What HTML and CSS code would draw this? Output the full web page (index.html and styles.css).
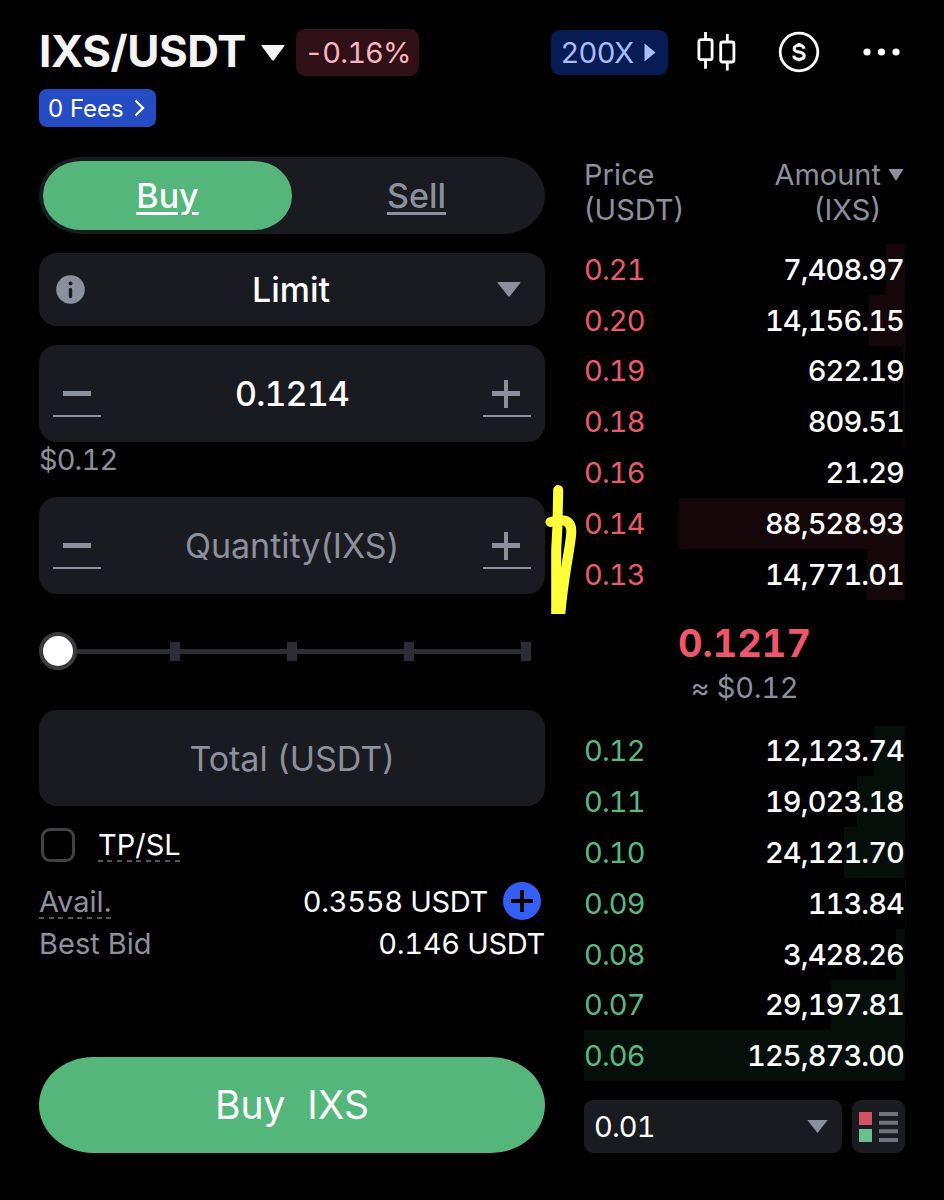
FILE: index.html
```html
<!DOCTYPE html>
<html lang="en">
<head>
  <meta charset="UTF-8" />
  <meta name="viewport" content="width=device-width, initial-scale=1" />
  <title>IXS/USDT</title>
  <link rel="stylesheet" href="styles.css">
</head>
<body>
  <header class="topbar">
    <h1 class="pair">IXS/USDT</h1>
    <svg class="pair-arrow" width="24" height="16" viewBox="0 0 24 16"><path d="M1 0h22q1 0 .4 1L13 15q-1 1-2 0L.6 1Q0 0 1 0z" fill="#f4f4f4"/></svg>
    <span class="change num">-0.16%</span>
    <div class="tools">
      <span class="leverage">200X
        <svg width="12" height="19" viewBox="0 0 12 19"><path d="M.5 0.5L11.5 9.5L.5 18.5z" fill="#a9bdfb"/></svg>
      </span>
      <svg class="icon-candles" width="40" height="40" viewBox="0 0 40 40" fill="none" stroke="#fff" stroke-width="2.8">
        <rect x="2.900" y="7.700" width="13.200" height="20" rx="2"/>
        <path d="M9.500 0v7.700M9.500 27.700v9"/>
        <rect x="24.700" y="10" width="13.200" height="20" rx="2"/>
        <path d="M31.300 2v8M31.300 30v8.500"/>
      </svg>
      <svg class="icon-dollar" width="42" height="42" viewBox="0 0 42 42">
        <circle cx="21" cy="21" r="18.800" fill="none" stroke="#fff" stroke-width="2.800"/>
        <path d="M26 17.800c-.4-2.300-2.300-3.500-5-3.500s-4.800 1.300-4.800 3.400c0 2.300 2.300 2.900 4.800 3.400s5.200 1.200 5.200 3.600c0 2.200-2.200 3.500-5.200 3.500s-5-1.300-5.300-3.600M21 12v2.500M21 27.500v2.700" fill="none" stroke="#fff" stroke-width="3.100"/>
      </svg>
      <svg class="icon-more" width="38" height="8" viewBox="0 0 38 8" fill="#fff"><circle cx="4" cy="4" r="3.600"/><circle cx="18.500" cy="4" r="3.600"/><circle cx="33" cy="4" r="3.600"/></svg>
    </div>
  </header>
  <div class="fees">0 Fees
    <svg width="11" height="18" viewBox="0 0 11 18"><path d="M1.500 1.500L9 9l-7.500 7.500" fill="none" stroke="#fff" stroke-width="2.300"/></svg>
  </div>

  <main class="trade">
    <section class="form">
      <div class="tabs">
        <div class="tab active"><span>Buy</span></div>
        <div class="tab"><span>Sell</span></div>
      </div>

      <div class="field order-type">
        <svg class="info" width="29" height="29" viewBox="0 0 29 29"><circle cx="14.500" cy="14.500" r="14.300" fill="#8c909e"/><circle cx="14.500" cy="8.500" r="2" fill="#1a1b20"/><path d="M14.500 14.500v7" stroke="#1a1b20" stroke-width="3.400" stroke-linecap="round"/></svg>
        <span class="value">Limit</span>
        <svg class="down" width="24" height="15" viewBox="0 0 24 15"><path d="M1 0h22q1 0 .3 1L13 14q-1 1-2 0L.7 1Q0 0 1 0z" fill="#8c909e"/></svg>
      </div>

      <div class="field stepper">
        <div class="step"><i class="bar"></i></div>
        <span class="value num">0.1214</span>
        <div class="step plus"><i class="bar"></i></div>
      </div>
      <div class="fiat num">$0.12</div>

      <div class="field stepper">
        <div class="step"><i class="bar"></i></div>
        <span class="value hint">Quantity(IXS)</span>
        <div class="step plus"><i class="bar"></i></div>
      </div>

      <div class="slider">
        <i class="knob"></i>
        <i class="track"></i><i class="tick"></i>
        <i class="track"></i><i class="tick"></i>
        <i class="track"></i><i class="tick"></i>
        <i class="track"></i><i class="tick"></i>
      </div>

      <div class="field total"><span class="value hint">Total (USDT)</span></div>

      <div class="tpsl">
        <i class="check"></i>
        <span class="dashed">TP/SL</span>
      </div>
      <div class="info-row">
        <span class="label dashed">Avail.</span>
        <span class="amount">0.3558 USDT</span>
        <svg class="add" width="38" height="38" viewBox="0 0 38 38"><circle cx="19" cy="19" r="19" fill="#335ff5"/><path d="M8 19h22M19 8v22" stroke="#000" stroke-width="3.800"/></svg>
      </div>
      <div class="info-row bid">
        <span class="label">Best Bid</span>
        <span class="amount">0.146 USDT</span>
      </div>

      <div class="submit">Buy&nbsp; IXS</div>
    </section>

    <section class="book">
      <div class="book-head">
        <div class="col-price">Price<br>(USDT)</div>
        <div class="col-amount">Amount<br>(IXS)</div>
        <svg width="16" height="12" viewBox="0 0 16 12"><path d="M.5 0h15L8 12z" fill="#8c909e"/></svg>
      </div>
      <div id="asks" class="rows asks"></div>
      <div class="last">0.1217</div>
      <div class="last-fiat">≈ $0.12</div>
      <div id="bids" class="rows bids"></div>
      <div class="book-foot">
        <div class="precision num">0.01
          <svg width="21" height="13" viewBox="0 0 21 13"><path d="M.3 0h20.400L10.500 13z" fill="#8c909e"/></svg>
        </div>
        <div class="layout-btn">
          <svg width="39" height="30" viewBox="0 0 39 30">
            <path d="M0 0h13v13H0z" fill="#d25368"/>
            <path d="M0 17h13v13H0z" fill="#6bbf92"/>
            <path d="M20 2h19M20 10.700h19M20 19.300h19M20 28h19" stroke="#6f737d" stroke-width="4"/>
          </svg>
        </div>
      </div>
    </section>
  </main>

  <!-- hand drawn mark over the page -->
  <svg class="mark" width="40" height="134" viewBox="0 0 40 134" fill="none" stroke="#ffff3c" stroke-width="10" stroke-linecap="round" stroke-linejoin="round">
    <path d="M18.200 10L17.500 45L16.200 70V145"/>
    <path d="M10.500 42C20 39.500 31.500 37.500 31.300 52C31 66 22 100 19.500 145"/>
  </svg>

  <script>
    const asks = [
      ["0.21", "7,408.97"], ["0.20", "14,156.15"], ["0.19", "622.19"], ["0.18", "809.51"],
      ["0.16", "21.29"], ["0.14", "88,528.93"], ["0.13", "14,771.01"]
    ];
    const bids = [
      ["0.12", "12,123.74"], ["0.11", "19,023.18"], ["0.10", "24,121.70"], ["0.09", "113.84"],
      ["0.08", "3,428.26"], ["0.07", "29,197.81"], ["0.06", "125,873.00"]
    ];

    const toNumber = (s) => Number(s.replace(/,/g, ""));
    const max = Math.max(...asks.concat(bids).map(r => toNumber(r[1])));

    // depth bar of each row is relative to the biggest amount
    const renderRows = (id, rows) => {
      document.getElementById(id).innerHTML = rows.map(([price, amount]) => `
        <div class="row num">
          <i class="depth" style="width:${(toNumber(amount) / max * 100).toFixed(2)}%"></i>
          <span class="price">${price}</span>
          <span class="qty">${amount}</span>
        </div>`).join("");
    };

    renderRows("asks", asks);
    renderRows("bids", bids);
  </script>
</body>
</html>
```
FILE: styles.css
```css
* {
  box-sizing: border-box;
}
body {
  margin: 0;
  padding: 29px 39px 0;
  height: 1200px;
  overflow: hidden;
  position: relative;
  background-color: #000;
  color: #fff;
  font-family: Inter, "Liberation Sans", sans-serif;
  font-size: 29px;
  white-space: nowrap;
}
svg {
  display: block;
  flex: none;
}
.num {
  font-variant-numeric: tabular-nums;
  letter-spacing: -0.9px;
}
.topbar {
  display: flex;
  align-items: center;
  height: 47px;
}
.pair {
  margin: 0;
  width: 206px;
  font-size: 44px;
  font-weight: 700;
  letter-spacing: -0.5px;
  line-height: 45px;
  padding-bottom: 2px;
  color: #f4f4f4;
}
.pair-arrow {
  margin-left: 16px;
}
.change {
  margin-left: 11px;
  width: 123px;
  height: 47px;
  line-height: 47px;
  text-align: center;
  border-radius: 9px;
  background-color: #300f16;
  color: #f7b5c0;
}
.tools {
  display: flex;
  align-items: center;
  margin-left: 132px;
}
.leverage {
  display: flex;
  align-items: center;
  justify-content: space-between;
  width: 117px;
  height: 45px;
  padding: 0 12px 0 10px;
  border-radius: 9px;
  background-color: #071b54;
  color: #a9bdfb;
}
.icon-candles {
  margin: 0 0 2px 28px;
}
.icon-dollar {
  margin: 0 0 1px 42px;
}
.icon-more {
  margin: 0 0 1px 43px;
}
.fees {
  display: flex;
  align-items: center;
  justify-content: space-between;
  width: 117px;
  height: 38px;
  margin-top: 13px;
  padding: 0 11px 0 9px;
  border-radius: 8px;
  background-color: #264cc5;
  font-size: 24px;
}
.trade {
  display: flex;
  gap: 39px;
  margin-top: 30px;
}
.form {
  width: 506px;
}
.tabs {
  display: flex;
  height: 77px;
  padding: 4px;
  border-radius: 42px / 38px;
  background-color: #1a1b20;
}
.tab {
  flex: 1;
  display: flex;
  align-items: center;
  justify-content: center;
  border-radius: 38px / 34px;
  color: #8c909e;
  font-size: 34px;
  font-weight: 450;
  text-decoration: underline;
  text-decoration-thickness: 3px;
  text-underline-offset: 4px;
}
.tab.active {
  background-color: #55b67b;
  color: #fff;
}
.field {
  display: flex;
  align-items: center;
  border-radius: 18px;
  background-color: #1a1b20;
}
.value {
  flex: 1;
  text-align: center;
  font-size: 34px;
  font-weight: 450;
}
.hint {
  color: #8c909e;
  font-weight: 400;
}
.order-type {
  height: 73px;
  margin-top: 19px;
  padding: 0 24px 0 17px;
}
.stepper {
  height: 97px;
  padding: 0 14px;
}
.order-type + .stepper {
  margin-top: 19px;
}
.step {
  display: flex;
  align-items: center;
  justify-content: center;
  position: relative;
  width: 48px;
  height: 46px;
  padding-top: 2px;
  border-bottom: 2px solid #8c909e;
}
.step .bar {
  width: 28px;
  height: 5px;
  background-color: #8c909e;
}
.plus .bar {
  margin-right: 2px;
}
/* vertical bar of the plus sign */
.plus .bar::after {
  content: "";
  position: absolute;
  left: 21px;
  top: 9px;
  width: 4px;
  height: 28px;
  background-color: #8c909e;
}
.fiat {
  height: 55px;
  line-height: 36px;
  color: #8c909e;
}
.slider {
  display: flex;
  align-items: center;
  height: 38px;
  margin-top: 38px;
  padding-right: 14px;
}
.knob {
  width: 38px;
  height: 38px;
  border: 4px solid #3b3b3e;
  border-radius: 50%;
  background-color: #fff;
}
.track {
  flex: 1;
  height: 5px;
  background-color: #2a2c36;
}
.knob + .track {
  flex: none;
  width: 93px;
}
.tick {
  width: 10px;
  height: 19px;
  background-color: #2b2c35;
}
.total {
  height: 96px;
  margin-top: 40px;
}
.tpsl {
  display: flex;
  align-items: center;
  gap: 23px;
  height: 35px;
  margin-top: 21px;
  padding-left: 2px;
}
.check {
  width: 34px;
  height: 34px;
  border: 3px solid #414145;
  border-radius: 9px;
}
.dashed {
  line-height: 35px;
  background: repeating-linear-gradient(90deg, #55565c 0 5px, transparent 5px 9.600px) bottom / 100% 2px no-repeat;
}
.info-row {
  display: flex;
  align-items: center;
  height: 42px;
  margin-top: 18px;
}
.info-row.bid {
  margin-top: 0;
}
.label {
  color: #8c909e;
}
.amount {
  margin-left: auto;
  font-variant-numeric: tabular-nums;
  letter-spacing: -0.3px;
}
.add {
  margin: 0 4px 0 15px;
}
.submit {
  height: 96px;
  margin-top: 93px;
  line-height: 96px;
  text-align: center;
  border-radius: 54px / 48px;
  background-color: #55b67b;
  font-size: 39px;
}
.book {
  width: 321px;
}
.book-head {
  display: flex;
  height: 87px;
  color: #8c909e;
  line-height: 35px;
}
.col-amount {
  margin-left: auto;
  text-align: right;
}
.book-head svg {
  margin: 12px 1px 0 7px;
}
.row {
  display: flex;
  align-items: center;
  justify-content: space-between;
  position: relative;
  height: 50.800px;
}
/* lies under the numbers */
.depth {
  position: absolute;
  top: 0;
  right: 0;
  height: 100%;
}
.price,
.qty {
  position: relative;
}
.qty {
  padding-right: 1px;
  font-weight: 450;
}
.asks .depth {
  background-color: #150609;
}
.bids .depth {
  background-color: #040f0a;
}
.asks .price {
  color: #eb5a6c;
}
.bids .price {
  color: #57b982;
}
.last {
  height: 47px;
  margin-top: 24px;
  line-height: 39px;
  text-align: center;
  color: #ee566c;
  font-size: 38px;
  font-weight: 700;
  font-variant-numeric: tabular-nums;
}
.last-fiat {
  height: 55px;
  line-height: 34px;
  text-align: center;
  color: #8c909e;
  font-variant-numeric: tabular-nums;
  letter-spacing: -0.3px;
}
.book-foot {
  display: flex;
  gap: 10px;
  height: 53px;
  margin-top: 19px;
}
.precision {
  flex: 1;
  display: flex;
  align-items: center;
  justify-content: space-between;
  padding: 0 14px 0 10px;
  border-radius: 9px;
  background-color: #1a1b20;
}
.layout-btn {
  display: flex;
  align-items: center;
  justify-content: center;
  width: 53px;
  border-radius: 9px;
  background-color: #1a1b20;
}
.mark {
  position: absolute;
  left: 540px;
  top: 480px;
}
```
